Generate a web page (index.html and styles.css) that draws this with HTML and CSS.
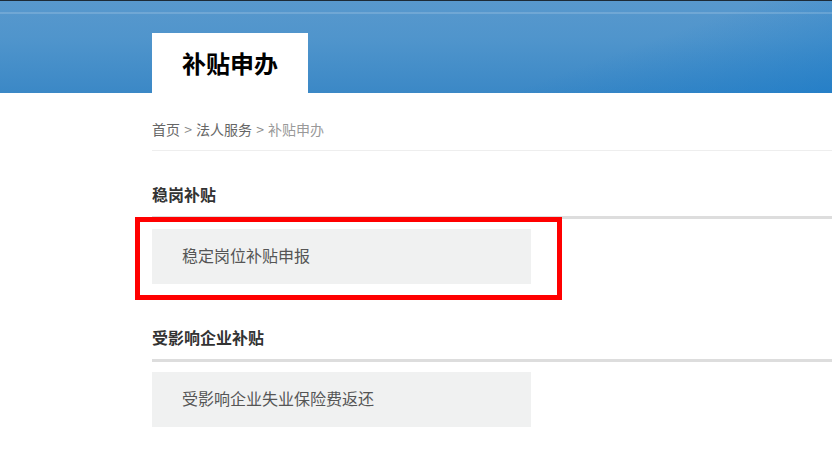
FILE: index.html
```html
<!DOCTYPE html>
<html lang="zh-CN">
<head>
<meta charset="utf-8">
<title>补贴申办</title>
<link rel="stylesheet" href="styles.css">
</head>
<body>
<header class="banner">
  <div class="banner-shine"></div>
  <div class="tab">补贴申办</div>
</header>
<main class="content">
  <nav class="crumbs">
    <a class="crumb-link" href="#">首页</a> &gt; <a class="crumb-link" href="#">法人服务</a> &gt; <span class="crumb-current">补贴申办</span>
  </nav>
  <section class="group">
    <h2 class="group-title">稳岗补贴</h2>
    <a class="item" href="#">稳定岗位补贴申报</a>
  </section>
  <section class="group group-second">
    <h2 class="group-title">受影响企业补贴</h2>
    <a class="item" href="#">受影响企业失业保险费返还</a>
  </section>
</main>
<div class="highlight"></div>
</body>
</html>
```
FILE: styles.css
```css
html, body {
  margin: 0;
  padding: 0;
  background: #ffffff;
  font-family: "Noto Sans CJK SC", "Noto Sans", sans-serif;
}

.banner {
  position: relative;
  height: 92px;
  border-top: 1px solid #1d2a36;
  background:
    linear-gradient(160deg, rgba(255,255,255,0) 70%, rgba(20,120,200,0.55) 100%),
    linear-gradient(180deg, #5898cd 0%, #5095cc 40%, #3b88c6 100%);
  display: flex;
  align-items: flex-end;
  padding-left: 152px;
}

.banner-shine {
  position: absolute;
  left: 0;
  right: 0;
  top: 11px;
  height: 2px;
  background: rgba(255,255,255,0.16);
}

.tab {
  width: 156px;
  height: 60px;
  padding-bottom: 2px;
  box-sizing: border-box;
  background: #ffffff;
  color: #000000;
  font-size: 24px;
  font-weight: 700;
  display: flex;
  align-items: center;
  justify-content: center;
  position: relative;
}

.content {
  padding-left: 152px;
}

.crumbs {
  padding-top: 26px;
  padding-bottom: 11px;
  line-height: 20px;
  font-size: 14px;
  color: #888888;
  border-bottom: 1px solid #eeeeee;
  word-spacing: 1px;
}

.crumb-link {
  color: #666666;
  text-decoration: none;
}

.crumb-current {
  color: #999999;
}

.group-title {
  margin: 31px 0 0 0;
  padding-bottom: 10px;
  font-size: 16px;
  line-height: 24px;
  font-weight: 700;
  color: #333333;
  border-bottom: 3px solid #dddddd;
}

.group-second .group-title {
  margin-top: 41px;
}

.item {
  display: flex;
  align-items: center;
  box-sizing: border-box;
  margin-top: 10px;
  width: 379px;
  height: 55px;
  padding-left: 30px;
  padding-bottom: 3px;
  background: #f0f1f1;
  color: #555555;
  font-size: 16px;
  text-decoration: none;
}

.highlight {
  position: absolute;
  left: 135px;
  top: 217px;
  width: 417px;
  height: 73px;
  border: 5px solid #ff0000;
  pointer-events: none;
}
```
